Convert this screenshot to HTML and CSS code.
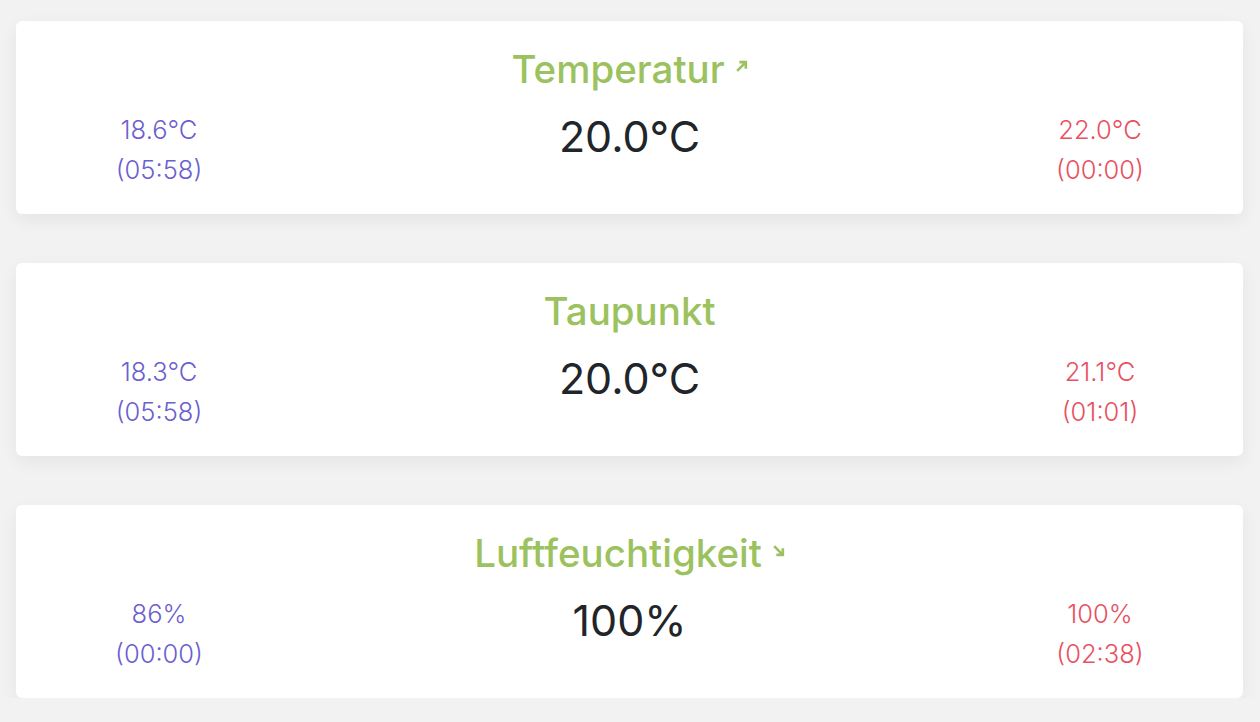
FILE: index.html
```html
<!DOCTYPE html>
<html lang="de">
<head>
    <meta charset="UTF-8">
    <meta name="viewport" content="width=device-width, initial-scale=1.0">
    <title>Wetter</title>
    <link rel="stylesheet" href="styles.css">
</head>
<body>
    <div class="cards">
        <div class="card">
            <h2 class="card-title">Temperatur<svg class="trend" viewBox="0 0 12 12"><path d="M2 10 L10 2 M4 2 H10 V8" /></svg></h2>
            <div class="values">
                <div class="side min">18.6°C<br>(05:58)</div>
                <div class="current">20.0°C</div>
                <div class="side max">22.0°C<br>(00:00)</div>
            </div>
        </div>

        <div class="card">
            <h2 class="card-title">Taupunkt</h2>
            <div class="values">
                <div class="side min">18.3°C<br>(05:58)</div>
                <div class="current">20.0°C</div>
                <div class="side max">21.1°C<br>(01:01)</div>
            </div>
        </div>

        <div class="card">
            <h2 class="card-title">Luftfeuchtigkeit<svg class="trend" viewBox="0 0 12 12"><path d="M2 2 L10 10 M4 10 H10 V4" /></svg></h2>
            <div class="values">
                <div class="side min">86%<br>(00:00)</div>
                <div class="current">100%</div>
                <div class="side max">100%<br>(02:38)</div>
            </div>
        </div>
    </div>
</body>
</html>
```

FILE: styles.css
```css
body {
    margin: 0;
    background: #f2f2f2;
    font-family: Inter, "Noto Sans", sans-serif;
    color: #212529;
}
.cards {
    display: flex;
    flex-direction: column;
    gap: 49px;
    padding: 21px 17px 0 16px;
}
.card {
    background: white;
    border-radius: 6px;
    box-shadow: 0 6px 18px rgba(0, 0, 0, 0.06);
    padding: 24px 0;
}
.card-title {
    margin: 0;
    text-align: center;
    font-size: 38.5px;
    font-weight: 500;
    line-height: 48px;
    color: #9bc25e;
}
.trend {
    width: 13px;
    height: 13px;
    margin-left: 10px;
    vertical-align: 10px;
    fill: none;
    stroke: #9bc25e;
    stroke-width: 2.4;
}
.values {
    display: grid;
    grid-template-columns: 286px 1fr 286px;
    margin-top: 17px;
}
.side {
    text-align: center;
    font-size: 25.5px;
    font-weight: 300;
    line-height: 40px;
}
.min {
    color: #6c5fd0;
}
.max {
    color: #e8515f;
}
.current {
    text-align: center;
    font-size: 43px;
    line-height: 52px;
}
```
